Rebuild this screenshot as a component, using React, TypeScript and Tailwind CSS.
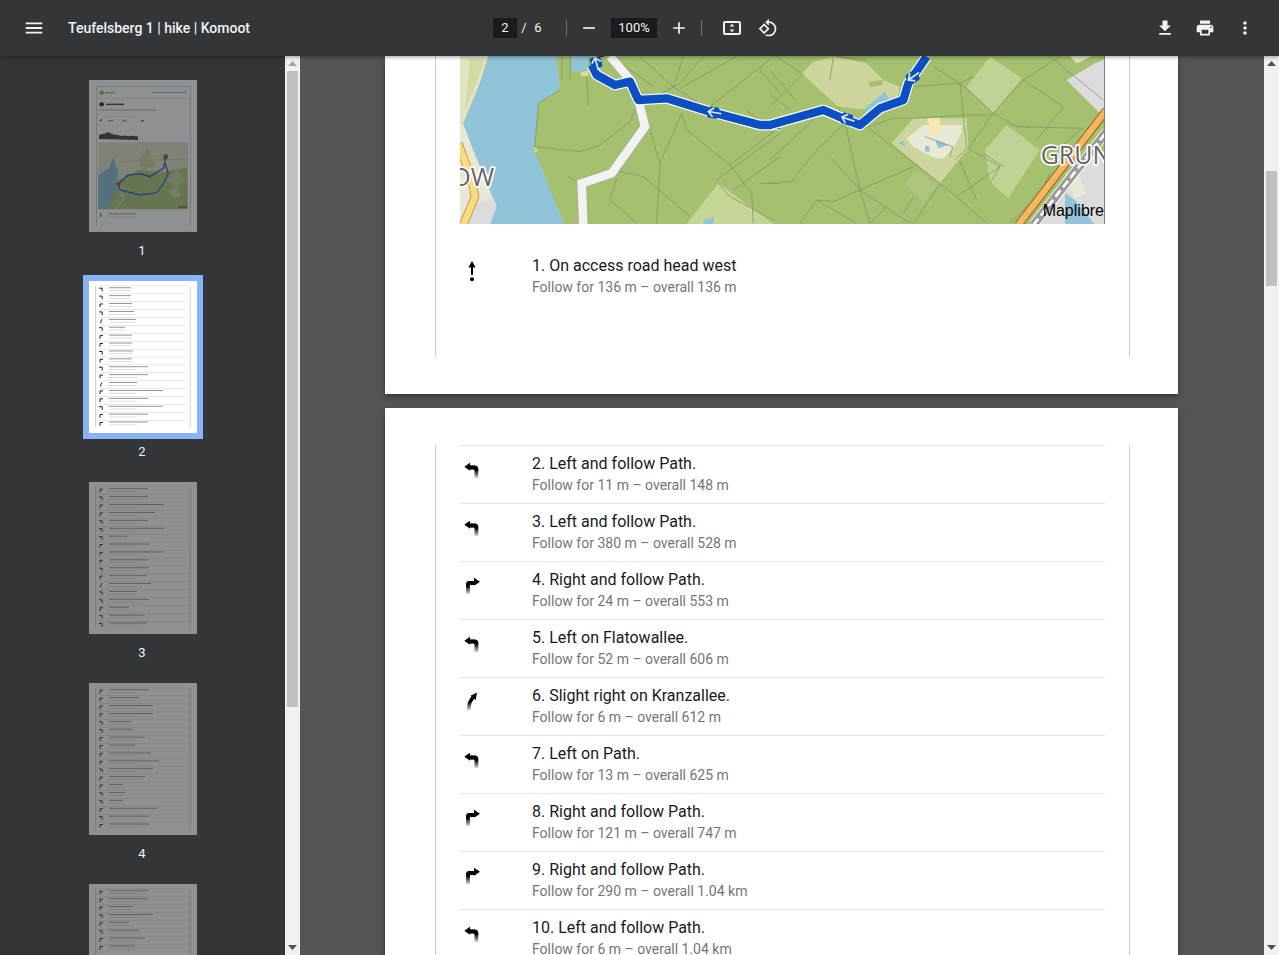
import React from "react";

const P = {
  menu: "M3 18h18v-2H3v2zm0-5h18v-2H3v2zm0-7v2h18V6H3z",
  minus: "M19 13H5v-2h14v2z",
  plus: "M19 13h-6v6h-2v-6H5v-2h6V5h2v6h6v2z",
  fit: "M19 5H5c-1.1 0-2 .9-2 2v10c0 1.1.9 2 2 2h14c1.1 0 2-.9 2-2V7c0-1.1-.9-2-2-2zm0 12H5V7h14v10zM12 7.8l-2.4 2.7h4.8zM12 16.2l2.4-2.7H9.6z",
  rotate: "M7.34 6.41L.86 12.9l6.49 6.48 6.49-6.48-6.5-6.49zM3.69 12.9l3.66-3.66L11 12.9l-3.66 3.66-3.65-3.66zm15.67-6.26C17.61 4.88 15.3 4 13 4V.76L8.76 5 13 9.24V6c1.79 0 3.58.68 4.95 2.05 2.73 2.73 2.73 7.17 0 9.9C16.58 19.32 14.79 20 13 20c-.97 0-1.94-.21-2.84-.61l-1.49 1.49C10.02 21.62 11.51 22 13 22c2.3 0 4.61-.88 6.36-2.64 3.52-3.51 3.52-9.21 0-12.72z",
  download: "M19 9h-4V3H9v6H5l7 7 7-7zM5 18v2h14v-2H5z",
  print: "M19 8H5c-1.66 0-3 1.34-3 3v6h4v4h12v-4h4v-6c0-1.66-1.34-3-3-3zm-3 11H8v-5h8v5zm3-7c-.55 0-1-.45-1-1s.45-1 1-1 1 .45 1 1-.45 1-1 1zm-1-9H6v4h12V3z",
  more: "M12 8c1.1 0 2-.9 2-2s-.9-2-2-2-2 .9-2 2 .9 2 2 2zm0 2c-1.1 0-2 .9-2 2s.9 2 2 2 2-.9 2-2-.9-2-2-2zm0 6c-1.1 0-2 .9-2 2s.9 2 2 2 2-.9 2-2-.9-2-2-2z",
};

function Ico({ d, size = 20, className = "" }: { d: string; size?: number; className?: string }) {
  return (
    <svg width={size} height={size} viewBox="0 0 24 24" fill="#f1f3f4" className={"shrink-0 " + className}>
      <path d={d} fillRule="evenodd" />
    </svg>
  );
}

function Toolbar() {
  return (
    <div className="relative z-10 flex h-14 shrink-0 items-center bg-[#323639] text-[#f1f3f4] shadow-[0_1px_4px_rgba(0,0,0,0.4)]">
      <div className="flex w-[493px] items-center pl-[23px]">
        <Ico d={P.menu} size={22} />
        <span className="ml-[23px] text-[14px] font-medium whitespace-nowrap">Teufelsberg 1 | hike | Komoot</span>
      </div>
      <div className="flex h-5 w-6 items-center justify-center bg-[#191b1c] text-[13px]">2</div>
      <span className="w-[14px] text-center text-[13px]">/</span>
      <span className="w-[14px] text-center text-[13px]">6</span>
      <div className="ml-[21px] h-4 w-px bg-[#6e7174]" />
      <Ico d={P.minus} className="ml-3" />
      <div className="ml-3 flex h-5 w-[46px] items-center justify-center bg-[#191b1c] text-[13px]">100%</div>
      <Ico d={P.plus} className="ml-3" />
      <div className="ml-3 h-4 w-px bg-[#6e7174]" />
      <Ico d={P.fit} size={24} className="ml-[18px]" />
      <Ico d={P.rotate} className="ml-[14px]" />
      <div className="ml-auto flex items-center gap-5 pr-6">
        <Ico d={P.download} />
        <Ico d={P.print} />
        <Ico d={P.more} />
      </div>
    </div>
  );
}

function Arrow({ down, color }: { down?: boolean; color: string }) {
  return (
    <div className="flex h-[15px] shrink-0 items-center justify-center">
      <svg width="9" height="5" viewBox="0 0 9 5">
        <polygon points={down ? "0,0 9,0 4.5,5" : "4.5,0 9,5 0,5"} fill={color} />
      </svg>
    </div>
  );
}

function Scrollbar({ top, height, upColor }: { top: number; height: number; upColor: string }) {
  return (
    <div className="flex h-full w-[15px] shrink-0 flex-col bg-[#f1f1f1]">
      <Arrow color={upColor} />
      <div className="flex-1 px-[2px]">
        <div className="w-[11px] bg-[#c1c1c1]" style={{ marginTop: top, height }} />
      </div>
      <Arrow down color="#505050" />
    </div>
  );
}

/* ---------- big map ---------- */
const LW = { fill: "none", stroke: "#84946e", strokeWidth: 2.3 };
const leftLines = [
  "365,20 365,90", "390,20 390,85", "440,80 445,165",
  "360,120 295,160 285,290 420,305 480,285 570,215 590,165",
  "385,380 420,400", "630,240 660,340 650,520",
  "520,360 610,380 750,500", "530,385 510,450 590,520",
  "725,190 660,340", "725,190 740,240 870,345 935,430 940,520",
  "610,160 720,100 790,20", "530,30 640,110", "700,110 730,20", "600,20 700,110 810,180",
  "720,115 890,20", "810,170 1000,20", "870,345 1020,230", "830,390 1020,250",
  "880,420 1020,320", "960,400 1020,400", "835,400 870,440 1000,510",
  "850,180 990,230", "960,60 1020,130", "1000,250 920,180",
];
const rightLines = [
  "0,60 75,150", "0,130 60,180", "95,70 20,20", "100,70 0,170", "205,170 225,220 270,420 300,520",
  "180,90 190,20", "0,330 140,200", "0,400 65,395 100,350 150,290 225,220",
  "180,320 270,420 420,520", "140,450 190,455 270,420 430,350", "90,520 140,450 260,520",
  "300,230 365,205 430,205 590,195 670,195", "290,230 510,400", "510,400 430,520",
  "510,400 560,440 690,350", "560,440 650,520", "570,100 590,295 555,330", "430,110 570,100 670,190 595,295",
  "490,50 570,100 610,80", "670,190 760,90 870,20", "740,230 940,235", "670,190 740,230 780,230",
  "760,90 880,170 800,270", "595,295 690,350 660,400", "570,335 620,450", "640,310 700,350",
  "400,490 430,440", "200,20 290,30", "840,20 1000,150", "860,300 930,240", "720,520 810,430 840,370",
  "300,520 350,470", "540,320 548,290 465,260",
];

function RouteArrow({ x, y, rot }: { x: number; y: number; rot: number }) {
  return (
    <g transform={`translate(${x} ${y}) rotate(${rot})`}>
      <rect x="-17" y="-17" width="34" height="34" rx="8" fill="#0a50c4" />
      <path d="M24 -1 L-14 -1 M0 -15 L-15 -1 L0 13" fill="none" stroke="#dfe9f7" strokeWidth="5" />
    </g>
  );
}

function BigMap() {
  const left = "455,45 470,75 525,105 570,95 595,150 680,145 810,185 960,225 1020,225";
  const right = "-30,225 0,225 160,180 230,210 270,225 330,175 400,150 415,100 470,20";
  return (
    <svg width="645" height="168" viewBox="0 0 645 168" className="block">
      <rect width="645" height="168" fill="#a5c06f" />
      <g transform="translate(-20 -6) scale(0.33333)">
        <polygon points="60,18 145,18 120,100 70,220 60,220" fill="#e4e3c6" />
        <polygon points="90,25 135,25 110,100 75,180" fill="#d4dba2" />
        <polygon points="60,220 70,220 100,300 150,420 170,470 150,522 60,522" fill="#e9e7d6" />
        <polygon points="145,18 350,18 360,120 295,160 280,300 295,330 372,522 150,522 165,470 150,420 100,300 70,220 120,100" fill="#90c4d8" />
        <polygon points="280,290 295,300 285,310" fill="#d4dba2" />
        <polygon points="395,18 445,18 440,60 395,68" fill="#90c4d8" />
        <polygon points="420,68 445,60 445,78 425,78" fill="#d9dc9c" />
        <polygon points="740,522 835,400 1000,522" fill="#c5d596" />
        <polygon points="790,512 822,500 820,522 790,522" fill="#90c4d8" />
        <polygon points="60,500 95,470 160,440 170,470 150,522 60,522" fill="#dcdcdc" />
        <polyline points="55,280 95,390 105,440 70,525" fill="none" stroke="#cf9a4c" strokeWidth="26" />
        <polyline points="55,280 95,390 105,440 70,525" fill="none" stroke="#f7dc80" strokeWidth="20" />
        {leftLines.map((p) => <polyline key={p} points={p} {...LW} />)}
        <polyline points="510,18 575,95 600,170 615,230 515,370 425,400 430,525" fill="none" stroke="#9aa39a" strokeWidth="29" />
        <polyline points="510,18 575,95 600,170 615,230 515,370 425,400 430,525" fill="none" stroke="#f2f2f2" strokeWidth="26" />
        <circle cx="485" cy="12" r="10" fill="#8a1c1c" />
        <polyline points={left} fill="none" stroke="#ffffff" strokeWidth="32" strokeLinejoin="round" />
        <polyline points={left} fill="none" stroke="#0a50c4" strokeWidth="25" strokeLinejoin="round" />
        <RouteArrow x={820} y={188} rot={10} />
        <RouteArrow x={468} y={38} rot={75} />
        <text x="33" y="408" fontFamily="'Open Sans', sans-serif" fontSize="76" fill="#666" stroke="#fff" strokeWidth="10" paintOrder="stroke" strokeLinejoin="round">OW</text>
      </g>
      <g transform="translate(310 -6) scale(0.33333)">
        <polygon points="95,70 130,35 190,20 290,40 340,90 390,110 380,150 300,180 205,170" fill="#cdd69b" />
        <polygon points="295,95 340,90 335,105 300,112" fill="#a5c06f" />
        <polygon points="285,175 345,125 360,150 310,185 290,195" fill="#90c4d8" />
        <polygon points="590,110 660,20 755,85 670,190" fill="#bfd394" />
        <polygon points="645,300 710,225 810,300 750,390 715,445 660,395" fill="#bfd394" />
        <polygon points="365,280 430,205 590,205 595,295 510,400" fill="#cdd69f" />
        <polygon points="410,265 460,225 575,225 575,245 550,295 520,325 495,325 430,290" fill="#e9e9d5" />
        <polygon points="472,205 510,205 510,240 485,255" fill="#fbe9a9" />
        <polygon points="385,280 400,272 408,292" fill="#90c4d8" />
        <polygon points="465,290 475,285 480,305 465,305" fill="#90c4d8" />
        <polygon points="495,270 535,285 505,295" fill="#90c4d8" />
        <polygon points="405,400 440,360 505,405 460,460" fill="#adc57f" />
        <polygon points="890,90 975,40 1010,25 1010,210 940,140" fill="#dcdcdc" />
        <polygon points="900,18 965,18 920,40" fill="#dfe2bf" />
        {rightLines.map((p) => <polyline key={p} points={p} {...LW} />)}
        <polygon points="1010,300 890,370 800,525 1010,525" fill="#dcdcdc" />
        <polygon points="885,430 915,450 975,525 885,525" fill="#90c4d8" />
        <polygon points="895,400 925,370 950,430 915,445" fill="#e9e9d5" />
        <polyline points="745,525 1010,180" fill="none" stroke="#9c5a1c" strokeWidth="25" />
        <polyline points="745,525 1010,180" fill="none" stroke="#f3b95f" strokeWidth="19" />
        <polyline points="790,525 1010,245" fill="none" stroke="#ffffff" strokeWidth="30" />
        <polyline points="790,525 1010,245" fill="none" stroke="#9b9b9b" strokeWidth="25" />
        <polyline points="790,525 1010,245" fill="none" stroke="#fff" strokeWidth="8" strokeDasharray="24 12" />
        <polyline points={right} fill="none" stroke="#ffffff" strokeWidth="32" strokeLinejoin="round" />
        <polyline points={right} fill="none" stroke="#0a50c4" strokeWidth="25" strokeLinejoin="round" />
        <RouteArrow x={230} y={207} rot={18} />
        <RouteArrow x={428} y={82} rot={-35} />
        <text x="812" y="342" fontFamily="'Open Sans', sans-serif" fontSize="75" fontWeight="500" fill="#666" stroke="#fff" strokeWidth="10" paintOrder="stroke" strokeLinejoin="round">GRUN</text>
      </g>
      <text x="644" y="160" textAnchor="end" fontFamily="'Liberation Sans', sans-serif" fontSize="16" fill="#000">Maplibre</text>
      <rect x="644" width="1" height="168" fill="#808080" />
    </svg>
  );
}

/* ---------- turn icons ---------- */
function TurnIcon({ type }: { type: string }) {
  return (
    <svg width="24" height="24" viewBox="0 0 24 24" className="mt-[11px] shrink-0">
      <defs>
        <linearGradient id={"fade" + type} gradientUnits="userSpaceOnUse" x1="0" y1="13" x2="0" y2="21.5">
          <stop offset="0" stopColor="#000" />
          <stop offset="1" stopColor="#000" stopOpacity="0.1" />
        </linearGradient>
      </defs>
      {type === "L" && (
        <>
          <path d="M16.4 21V12.3a1.8 1.8 0 0 0-1.8-1.8H9" fill="none" stroke={"url(#fadeL)"} strokeWidth="3.8" />
          <path d="M4.3 9.7L10 5.7V13.7z" fill="#000" />
          <path d="M9 8.7h5.6a3.6 3.6 0 0 1 3.6 3.6v1.2h-3.7v-1.2H9z" fill="#000" />
        </>
      )}
      {type === "R" && (
        <>
          <path d="M8 21V11.8a1.8 1.8 0 0 1 1.8-1.8H15" fill="none" stroke={"url(#fadeR)"} strokeWidth="3.8" />
          <path d="M20 8.7L14 4.7V12.7z" fill="#000" />
          <path d="M15 8.1H9.6A3.6 3.6 0 0 0 6 11.7v1.8h3.7v-1.7H15z" fill="#000" />
        </>
      )}
      {type === "S" && (
        <>
          <path d="M8.8 21.5 C8.8 15 9.5 12.5 13 8.5" fill="none" stroke={"url(#fadeS)"} strokeWidth="3.6" />
          <path d="M17 3.5L10.5 6.8 15.7 11z" fill="#000" />
        </>
      )}
      {type === "U" && (
        <>
          <path d="M12 2L8.4 8.4H15.6z" fill="#000" />
          <rect x="11" y="8" width="2" height="8" fill="#000" />
          <circle cx="12" cy="20.3" r="2" fill="#000" />
        </>
      )}
    </svg>
  );
}

function Step({ type, title, sub, border = true }: { type: string; title: string; sub: string; border?: boolean }) {
  return (
    <div className={"flex h-[58px] border-t " + (border ? "border-[#e3e3e3]" : "border-transparent")}>
      <div className="w-[72px] shrink-0">
        <TurnIcon type={type} />
      </div>
      <div className="pt-[7px]">
        <div className="text-[16px] leading-[22px] text-[#1a1a1a]">{title}</div>
        <div className="-mt-px text-[14px] leading-[22px] text-[#757575]">{sub}</div>
      </div>
    </div>
  );
}

const steps = [
  ["L", "2. Left and follow Path.", "Follow for 11 m – overall 148 m"],
  ["L", "3. Left and follow Path.", "Follow for 380 m – overall 528 m"],
  ["R", "4. Right and follow Path.", "Follow for 24 m – overall 553 m"],
  ["L", "5. Left on Flatowallee.", "Follow for 52 m – overall 606 m"],
  ["S", "6. Slight right on Kranzallee.", "Follow for 6 m – overall 612 m"],
  ["L", "7. Left on Path.", "Follow for 13 m – overall 625 m"],
  ["R", "8. Right and follow Path.", "Follow for 121 m – overall 747 m"],
  ["R", "9. Right and follow Path.", "Follow for 290 m – overall 1.04 km"],
  ["L", "10. Left and follow Path.", "Follow for 6 m – overall 1.04 km"],
];

/* ---------- thumbnails ---------- */
function MiniTurn({ x, y, dir }: { x: number; y: number; dir: string }) {
  const d = dir === "L" ? `M${x - 2} ${y - 1}h3.2v3.2` : dir === "R" ? `M${x + 2} ${y - 1}h-3v3.2` : `M${x + 1} ${y - 1.6}l-1.2 2v2.2`;
  return <path d={d} fill="none" stroke="#222" strokeWidth="1" />;
}

function ListThumb({ rows }: { rows: [number, string][] }) {
  return (
    <svg width="108" height="152" viewBox="0 0 108 152" className="block">
      <rect width="108" height="152" fill="#fff" />
      <rect x="6.5" y="5" width="0.6" height="141" fill="#aaa" />
      <rect x="100.8" y="5" width="0.6" height="141" fill="#aaa" />
      {rows.map(([w, dir], i) => {
        const top = 4.7 + 7.9 * i;
        return (
          <g key={i}>
            <rect x="10" y={top} width="87.8" height="0.4" fill="#c4c4c4" />
            <MiniTurn x={12} y={top + 3.5} dir={dir} />
            <rect x="20" y={top + 1.6} width={w} height="0.9" fill="#8a8a8a" />
            <rect x="20" y={top + 4.5} width={Math.min(w, 28)} height="0.7" fill="#cfcfcf" />
          </g>
        );
      })}
    </svg>
  );
}

function FirstThumb() {
  return (
    <svg width="108" height="152" viewBox="0 0 108 152" className="block">
      <rect width="108" height="152" fill="#fff" />
      <rect x="7" y="6.5" width="94.7" height="0.5" fill="#999" />
      <rect x="7" y="6.5" width="0.5" height="140" fill="#999" />
      <rect x="101.3" y="6.5" width="0.5" height="140" fill="#999" />
      <circle cx="12.7" cy="12.7" r="2.2" fill="#8fb843" />
      <rect x="16" y="12" width="10" height="1.4" fill="#8fb843" />
      <rect x="63" y="12" width="35" height="1" fill="#7fa7d0" />
      <rect x="10" y="18.2" width="88" height="0.4" fill="#bbb" />
      <circle cx="12.7" cy="24.3" r="2.3" fill="#222" />
      <rect x="17" y="23.6" width="18" height="1.5" fill="#333" />
      <rect x="10" y="29.6" width="57" height="0.8" fill="#8a8a8a" />
      <rect x="17" y="36.6" width="28" height="0.5" fill="#ccc" />
      <path d="M11 41l2-1.4" stroke="#222" strokeWidth="1.2" />
      <rect x="19" y="40" width="5" height="1.5" fill="#d98080" />
      <rect x="33" y="40" width="5" height="1.5" fill="#d98080" />
      <rect x="52" y="40" width="2.6" height="1.6" fill="#555" />
      <path d="M10 59V55l3-1 3-.5 3-1.5 3 1.5 3 1 4 .5 3 1 4-.5 4 .8 4-.5 5 .6v3.5z" fill="#333" />
      <g>
        <rect x="9.3" y="62.7" width="89.4" height="66.6" fill="#a5c06f" />
        <polygon points="9.3,62.7 98.7,62.7 98.7,88 72,92 50,90 30,100 9.3,95" fill="#dcdfc0" />
        <polygon points="9.3,95 20,88 24,77 29,92 28,108 18,129 9.3,129" fill="#7fb8d4" />
        <polygon points="50,80 58,68 66,86 52,90" fill="#bfd394" />
        <polyline points="30,82 60,80 98,79" fill="none" stroke="#e8b870" strokeWidth="1" />
        <polyline points="55,62 52,82 60,120" fill="none" stroke="#c8c8b0" strokeWidth="0.5" />
        <polyline points="30,110 35,118 27,129" fill="none" stroke="#eee" strokeWidth="0.9" />
        <polygon points="80,110 88,106 92,116 84,118" fill="#c2d59a" />
        <polygon points="78,100 88,90 96,100 86,106" fill="#bfd394" />
        <polyline
          points="76.7,76.7 74.5,88 61,96.7 53,94 39,95 29.3,104.3 31,110 51,115 67.7,112.7 74.5,103.5 79.3,93.5 76,83"
          fill="none" stroke="#1f55b8" strokeWidth="1.4" />
        <circle cx="29.3" cy="104.3" r="1.9" fill="#b83030" />
        <circle cx="76.7" cy="76.7" r="2.2" fill="#222" />
        <circle cx="76.7" cy="76.7" r="1" fill="#aaa" />
        <rect x="89" y="126" width="9" height="2" fill="#444" opacity="0.6" />
      </g>
      <path d="M11.7 133v4" stroke="#222" strokeWidth="0.8" />
      <rect x="20" y="133.5" width="27" height="0.8" fill="#777" />
      <rect x="20" y="136.6" width="27" height="0.7" fill="#bbb" />
    </svg>
  );
}

const r2: [number, string][] = ([[22,"L"],[22,"L"],[23,"R"],[25,"L"],[27,"S"],[16,"L"],[23,"R"],[23,"R"],[24,"L"],[23,"R"],[39,"L"],[39,"R"],[28,"S"],[54,"R"],[39,"R"],[54,"L"],[39,"R"],[39,"R"]] as [number,string][]);
const r3: [number, string][] = ([[39,"R"],[39,"L"],[55,"R"],[46,"R"],[39,"L"],[55,"L"],[18,"L"],[40,"R"],[55,"R"],[40,"R"],[40,"L"],[38,"R"],[42,"S"],[28,"L"],[40,"L"],[20,"R"],[36,"L"],[38,"L"]] as [number,string][]);
const r4: [number, string][] = ([[40,"R"],[30,"R"],[44,"R"],[44,"R"],[22,"L"],[24,"L"],[36,"R"],[26,"R"],[42,"R"],[50,"R"],[44,"L"],[36,"R"],[14,"R"],[16,"L"],[14,"L"],[48,"R"],[40,"L"],[40,"R"]] as [number,string][]);
const r5: [number, string][] = ([[40,"R"],[40,"R"],[24,"R"],[44,"L"],[20,"R"],[30,"L"],[36,"R"],[26,"R"]] as [number,string][]);

function Thumb({ n, selected, children }: { n?: number; selected?: boolean; children: React.ReactNode }) {
  return (
    <div className="h-[201px] shrink-0 pl-[89px]">
      <div className={"h-[152px] w-[108px] " + (selected ? "ring-[6px] ring-[#8ab4f8]" : "opacity-[0.45]")}>{children}</div>
      {n !== undefined && (
        <div className="mt-[10px] w-[108px] pr-[2px] text-center text-[13px] leading-[18px] text-[#f1f3f4]">{n}</div>
      )}
    </div>
  );
}

function Sidebar() {
  return (
    <div className="h-full w-[285px] shrink-0 overflow-hidden bg-[#323639] pt-6">
      <Thumb n={1}><FirstThumb /></Thumb>
      <Thumb n={2} selected><ListThumb rows={r2} /></Thumb>
      <Thumb n={3}><ListThumb rows={r3} /></Thumb>
      <Thumb n={4}><ListThumb rows={r4} /></Thumb>
      <Thumb><ListThumb rows={r5} /></Thumb>
    </div>
  );
}

const pageShadow = "shadow-[0_4px_5px_0_rgba(0,0,0,0.14),0_1px_10px_0_rgba(0,0,0,0.12),0_2px_4px_-1px_rgba(0,0,0,0.2)]";

export default function App() {
  return (
    <div className="flex h-screen w-full flex-col overflow-hidden bg-[#323639] font-[family-name:Roboto,sans-serif]">
      <Toolbar />
      <div className="flex min-h-0 flex-1">
        <Sidebar />
        <Scrollbar top={0} height={636} upColor="#a3a3a3" />
        <div className="min-w-0 flex-1 overflow-hidden bg-[#525659] pl-[85px]">
          <div className={"h-[338px] w-[793px] bg-white pb-[37px] pl-[50px] " + pageShadow}>
            <div className="h-full w-[695px] border-x border-[#cccccc] px-6">
              <BigMap />
              <div className="mt-[23px]">
                <Step type="U" title="1. On access road head west" sub="Follow for 136 m – overall 136 m" border={false} />
              </div>
            </div>
          </div>
          <div className={"mt-[14px] h-[600px] w-[793px] bg-white pt-[37px] pl-[50px] " + pageShadow}>
            <div className="h-full w-[695px] border-x border-[#cccccc] px-6">
              {steps.map(([t, a, b]) => <Step key={a} type={t} title={a} sub={b} />)}
            </div>
          </div>
        </div>
        <Scrollbar top={100} height={115} upColor="#505050" />
      </div>
    </div>
  );
}
